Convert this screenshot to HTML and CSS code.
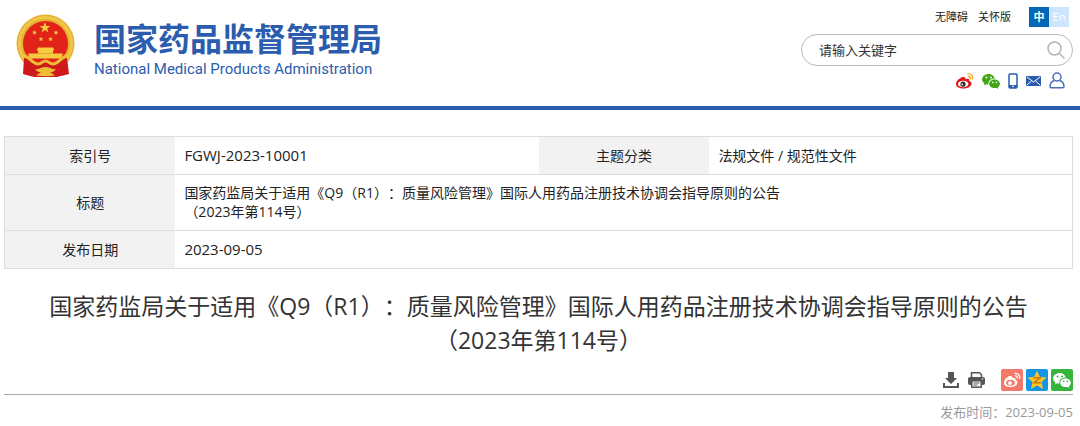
FILE: index.html
```html
<!DOCTYPE html>
<html lang="zh-CN">
<head>
  <meta charset="UTF-8" />
  <title>国家药品监督管理局</title>
  <meta name="viewport" content="width=device-width, initial-scale=1.0"/>
  <link rel="stylesheet" href="styles.css">
</head>
<body>

  <!-- Shared icon shapes -->
  <svg class="defs" aria-hidden="true">
    <symbol id="star" viewBox="0 0 20 20">
      <path d="M10 0l2.4 7.2H20l-6.1 4.5 2.3 7.3-6.2-4.5L3.8 19l2.3-7.3L0 7.2h7.6z"/>
    </symbol>
    <symbol id="wechat" viewBox="0 0 20 18">
      <path fill-rule="evenodd" d="M7.5 1C3.3 1 0 3.6 0 7c0 2 1 3.6 2.7 4.7L2 14l2.7-1.4c.8.2 1.6.4 2.5.4C6.5 9 9.6 6.2 14.3 6.2 13.5 3.2 10.8 1 7.5 1zM5 4a1 1 0 1 1 0 2.2A1 1 0 0 1 5 4zm5 0a1 1 0 1 1 0 2.2A1 1 0 0 1 10 4z"/>
      <path fill-rule="evenodd" d="M14 7.2c-3.4 0-6 2.1-6 4.9S10.6 17 14 17c.7 0 1.4-.1 2-.3l2.3 1.2-.6-2c1.4-.9 2.3-2.2 2.3-3.8 0-2.8-2.6-4.9-6-4.9zM12 9.7a.9.9 0 1 1 0 1.8.9.9 0 0 1 0-1.8zm4 0a.9.9 0 1 1 0 1.8.9.9 0 0 1 0-1.8z"/>
    </symbol>
  </svg>

  <header class="header">
    <a class="logo" href="#">
      <svg class="emblem" viewBox="0 0 60 64" aria-hidden="true">
        <circle cx="29.5" cy="29.5" r="29" fill="#e5b12f"/>
        <circle cx="29.5" cy="29.5" r="26" fill="none" stroke="#f0c548" stroke-width="3"/>
        <circle cx="29.5" cy="29.5" r="22.5" fill="#e2231a"/>
        <g fill="#f6cb3f">
          <use href="#star" x="23.5" y="8" width="11" height="11"/>
          <use href="#star" x="16" y="16" width="5" height="5"/>
          <use href="#star" x="37.5" y="16" width="5" height="5"/>
          <use href="#star" x="22.5" y="22.5" width="5" height="5"/>
          <use href="#star" x="32" y="22.5" width="5" height="5"/>
          <path d="M22 33.5h15l1.5 3H37v3H22v-3h-1.500z"/>
          <path d="M12 39.500h35l-2 5H14z"/>
        </g>
        <!-- red drapery and gold ribbon -->
        <path d="M8 44c5 0 8 3 12 5h19c4-2 7-5 12-5l2 16-8 2-4 1H18l-4-1-7-2z" fill="#cf1a1c"/>
        <path d="M8 41c5 2 9 9 14 9 4 0 4-3 7.500-3s3.500 3 7.500 3c5 0 9-7 14-9" fill="none" stroke="#edbd36" stroke-width="3"/>
        <path d="M19 55c4 1 6-2 10.500-2s6.500 3 10.500 2c-2 3-4 3-6 3l5 3.500q-9.500 1.500-19 0l5-3.500c-2 0-4 0-6-3z" fill="#edbd36"/>
      </svg>
      <span class="logo-text">
        <strong>国家药品监督管理局</strong>
        <span class="logo-en">National Medical Products Administration</span>
      </span>
    </a>

    <div class="tools">
      <nav class="top-links">
        <a href="#">无障碍</a>
        <a href="#">关怀版</a>
        <span class="lang"><a class="on" href="#">中</a><a href="#">En</a></span>
      </nav>
      <form class="search">
        <input type="text" placeholder="请输入关键字" aria-label="请输入关键字">
        <button type="button" aria-label="搜索">
          <svg width="18" height="18" viewBox="0 0 18 18" fill="none" stroke="#b5b5b5" stroke-width="1.5">
            <circle cx="7.5" cy="7.5" r="6.5"/><path d="M12 12l5.5 5.5"/>
          </svg>
        </button>
      </form>
      <nav class="socials">
        <a href="#" aria-label="微博">
          <svg width="18" height="16" viewBox="0 0 18 16">
            <path d="M7 4C4 4.5 0 8 0 11c0 3 3.5 4.5 7.5 4.5 4.5 0 8-2.3 8-5 0-1.6-1.3-2.3-2.3-2.6.5-2-.8-2.7-3.7-1.7C9.5 4.5 8.8 3.7 7 4z" fill="#dd1a1a"/>
            <ellipse cx="7.2" cy="11" rx="5.2" ry="3.2" fill="#fff"/>
            <circle cx="7" cy="11.2" r="2.6" fill="#333"/><circle cx="6.2" cy="11.4" r=".8" fill="#fff"/>
            <path d="M11.5 1c3.5-.6 6 2 5 5.5M11.8 3.6c1.800-.3 3 .9 2.500 2.600" fill="none" stroke="#f5a623" stroke-width="1.4"/>
          </svg>
        </a>
        <a href="#" aria-label="微信"><svg width="18" height="16" fill="#3fa714"><use href="#wechat"/></svg></a>
        <a href="#" aria-label="手机版">
          <svg width="10" height="16" viewBox="0 0 10 16">
            <rect x="1" y="1" width="8" height="14" rx="1" fill="#fff" stroke="#2b5cae" stroke-width="1.5"/>
            <path d="M1 12h8v3H1z" fill="#2b5cae"/><circle cx="5" cy="13.3" r=".9" fill="#fff"/>
          </svg>
        </a>
        <a href="#" aria-label="邮箱">
          <svg width="15" height="10" viewBox="0 0 15 10">
            <rect width="15" height="10" rx="1" fill="#2b5cae"/>
            <path d="M1 1l6.5 5L14 1M1 9l4.5-4M14 9L9.5 5" fill="none" stroke="#fff"/>
          </svg>
        </a>
        <a href="#" aria-label="个人中心">
          <svg width="16" height="17" viewBox="0 0 16 17" fill="none" stroke="#4a6fb8" stroke-width="1.5">
            <circle cx="8" cy="5" r="4"/><path d="M5.500 8.500C2.500 9.500 1 12 1 14.500q0 1.300 1.300 1.300h11.400q1.300 0 1.300-1.300c0-2.500-1.500-5-4.500-6"/>
          </svg>
        </a>
      </nav>
    </div>
  </header>

  <main class="content">
    <table class="info">
      <tr>
        <th scope="row">索引号</th>
        <td class="num">FGWJ-2023-10001</td>
        <th scope="row">主题分类</th>
        <td>法规文件 / 规范性文件</td>
      </tr>
      <tr>
        <th scope="row">标题</th>
        <td colspan="3">国家药监局关于适用《Q9（R1）：质量风险管理》国际人用药品注册技术协调会指导原则的公告<br>（2023年第114号）</td>
      </tr>
      <tr>
        <th scope="row">发布日期</th>
        <td class="num" colspan="3">2023-09-05</td>
      </tr>
    </table>

    <h1>国家药监局关于适用《Q9（R1）：质量风险管理》国际人用药品注册技术协调会指导原则的公告<br>（2023年第114号）</h1>

    <div class="actions">
      <button type="button" aria-label="下载">
        <svg width="16" height="16" viewBox="0 0 16 16" fill="#555">
          <path d="M5 0h6v6h3l-6 6-6-6h3z"/><path d="M0 11h2v3h12v-3h2v5H0z"/>
        </svg>
      </button>
      <button type="button" aria-label="打印">
        <svg width="17" height="16" viewBox="0 0 17 16">
          <path d="M3.5 5V.8h8l2 2V5" fill="#fff" stroke="#555" stroke-width="1.5"/>
          <rect y="5" width="17" height="8" rx="2" fill="#555"/>
          <rect x="3.8" y="8.8" width="9.4" height="6.4" fill="#fff" stroke="#555" stroke-width="1.5"/>
          <path d="M5.5 11h6M5.5 13h4" stroke="#555"/><circle cx="14.5" cy="7" r=".7" fill="#fff"/>
        </svg>
      </button>
      <div class="share">
        <a class="weibo" href="#" aria-label="分享到微博">
          <svg width="18" height="16" viewBox="0 0 18 16">
            <path d="M7 4C4 4.5 1 8 1 11c0 2.800 3 4 6.500 4 4 0 7-2.200 7-4.600 0-1.400-1-2.100-2-2.400.5-2-.8-2.500-3-1.700C9.500 4.500 8.800 3.700 7 4z" fill="#fff"/>
            <ellipse cx="7.5" cy="10.8" rx="4.4" ry="3" fill="#f4786a"/>
            <circle cx="7" cy="11" r="1.9" fill="#fff"/>
            <path d="M11.5 1.5c3.5-.6 6 2 5 5.5M11.8 4c1.800-.3 3 .9 2.500 2.600" fill="none" stroke="#fff" stroke-width="1.3"/>
          </svg>
        </a>
        <a class="qzone" href="#" aria-label="分享到QQ空间">
          <svg width="20" height="20" viewBox="0 0 20 20">
            <path d="M10 .5l2.800 6.300 6.800.7-5 4.600 1.400 7-6-3.600-6 3.600 1.400-7-5-4.600 6.800-.7z" fill="#fdc428"/>
            <path d="M6.500 7.800h6.500l-6 5h7" fill="none" stroke="#c9780c" stroke-width="1.5"/>
          </svg>
        </a>
        <a class="weixin" href="#" aria-label="分享到微信"><svg width="18" height="16" fill="#fff"><use href="#wechat"/></svg></a>
      </div>
    </div>
    <p class="date">发布时间：2023-09-05</p>
  </main>

</body>
</html>
```

FILE: styles.css
```css
* {
  box-sizing: border-box;
}

body {
  margin: 0;
  font-family: "Open Sans", "Noto Sans CJK SC", sans-serif;
  font-size: 14px;
  text-spacing-trim: space-all;
  color: #222;
  background: #fff;
}

a {
  color: inherit;
  text-decoration: none;
}

svg {
  display: block;
}

button {
  padding: 0;
  border: none;
  background: none;
  cursor: pointer;
}

.defs {
  position: absolute;
  width: 0;
  height: 0;
}

/* Header */
.header {
  display: flex;
  justify-content: space-between;
  min-height: 110px;
  padding: 7px 7px 0 16px;
  border-bottom: 4px solid #2b5cae;
}

.logo {
  display: flex;
  align-items: flex-start;
  gap: 18px;
  padding-top: 7px;
  color: #2b5cae;
}

.emblem {
  width: 60px;
  height: 64px;
}

.logo-text strong {
  display: block;
  font-size: 32px;
  line-height: 36px;
  padding-top: 7px;
}

.logo-en {
  display: block;
  font-family: Roboto, sans-serif;
  font-size: 15px;
  line-height: 24px;
}

.tools {
  width: 272px;
}

.top-links {
  display: flex;
  justify-content: flex-end;
  gap: 10px;
  padding-right: 4px;
  font-size: 11px;
  line-height: 20px;
}

.lang {
  display: flex;
  margin-left: 8px;
  color: #fff;
}

.lang a {
  width: 20px;
  text-align: center;
  background: #cce6ff;
}

.lang .on {
  font-weight: bold;
  background: #0068b7;
}

.search {
  display: flex;
  align-items: center;
  height: 32px;
  margin-top: 7px;
  padding: 0 7px 0 17px;
  border: 1px solid #bbb;
  border-radius: 16px;
}

.search input {
  flex: 1;
  min-width: 0;
  padding: 0;
  border: none;
  outline: none;
  font: inherit;
  font-size: 13px;
  background: none;
}

.search input::placeholder {
  color: #333;
}

.socials {
  display: flex;
  justify-content: flex-end;
  align-items: center;
  gap: 8px;
  padding: 6px 8px 0 0;
}

/* Document info */
.content {
  padding: 26px 7px 0 4px;
}

.info {
  width: 100%;
  table-layout: fixed;
  border-collapse: collapse;
  border: 1px solid #ddd;
}

.info th,
.info td {
  height: 38px;
  padding: 8px 9px 9px;
  border-bottom: 1px solid #ddd;
  line-height: 19px;
  text-align: left;
}

.info th {
  width: 16%;
  font-weight: normal;
  text-align: center;
  background: #f2f2f2;
}

.info .num {
  font-size: 15px;
}

h1 {
  margin: 20px 0 0;
  font-size: 23px;
  line-height: 34px;
  font-weight: normal;
  text-align: center;
  color: #333;
}

.actions {
  display: flex;
  justify-content: flex-end;
  align-items: center;
  gap: 9px;
  margin-top: 12px;
  padding-bottom: 3px;
  border-bottom: 1px solid #aaa;
}

.share {
  display: flex;
  gap: 3px;
  margin-left: 7px;
}

.share a {
  display: flex;
  align-items: center;
  justify-content: center;
  width: 22px;
  height: 22px;
  border-radius: 2px;
}

.weibo {
  background: #f4786a;
}

.qzone {
  background: #1296e8;
}

.weixin {
  background: #35b53c;
}

.date {
  margin: 7px 0 0;
  font-size: 13px;
  line-height: 20px;
  text-align: right;
  color: #999;
}
```
